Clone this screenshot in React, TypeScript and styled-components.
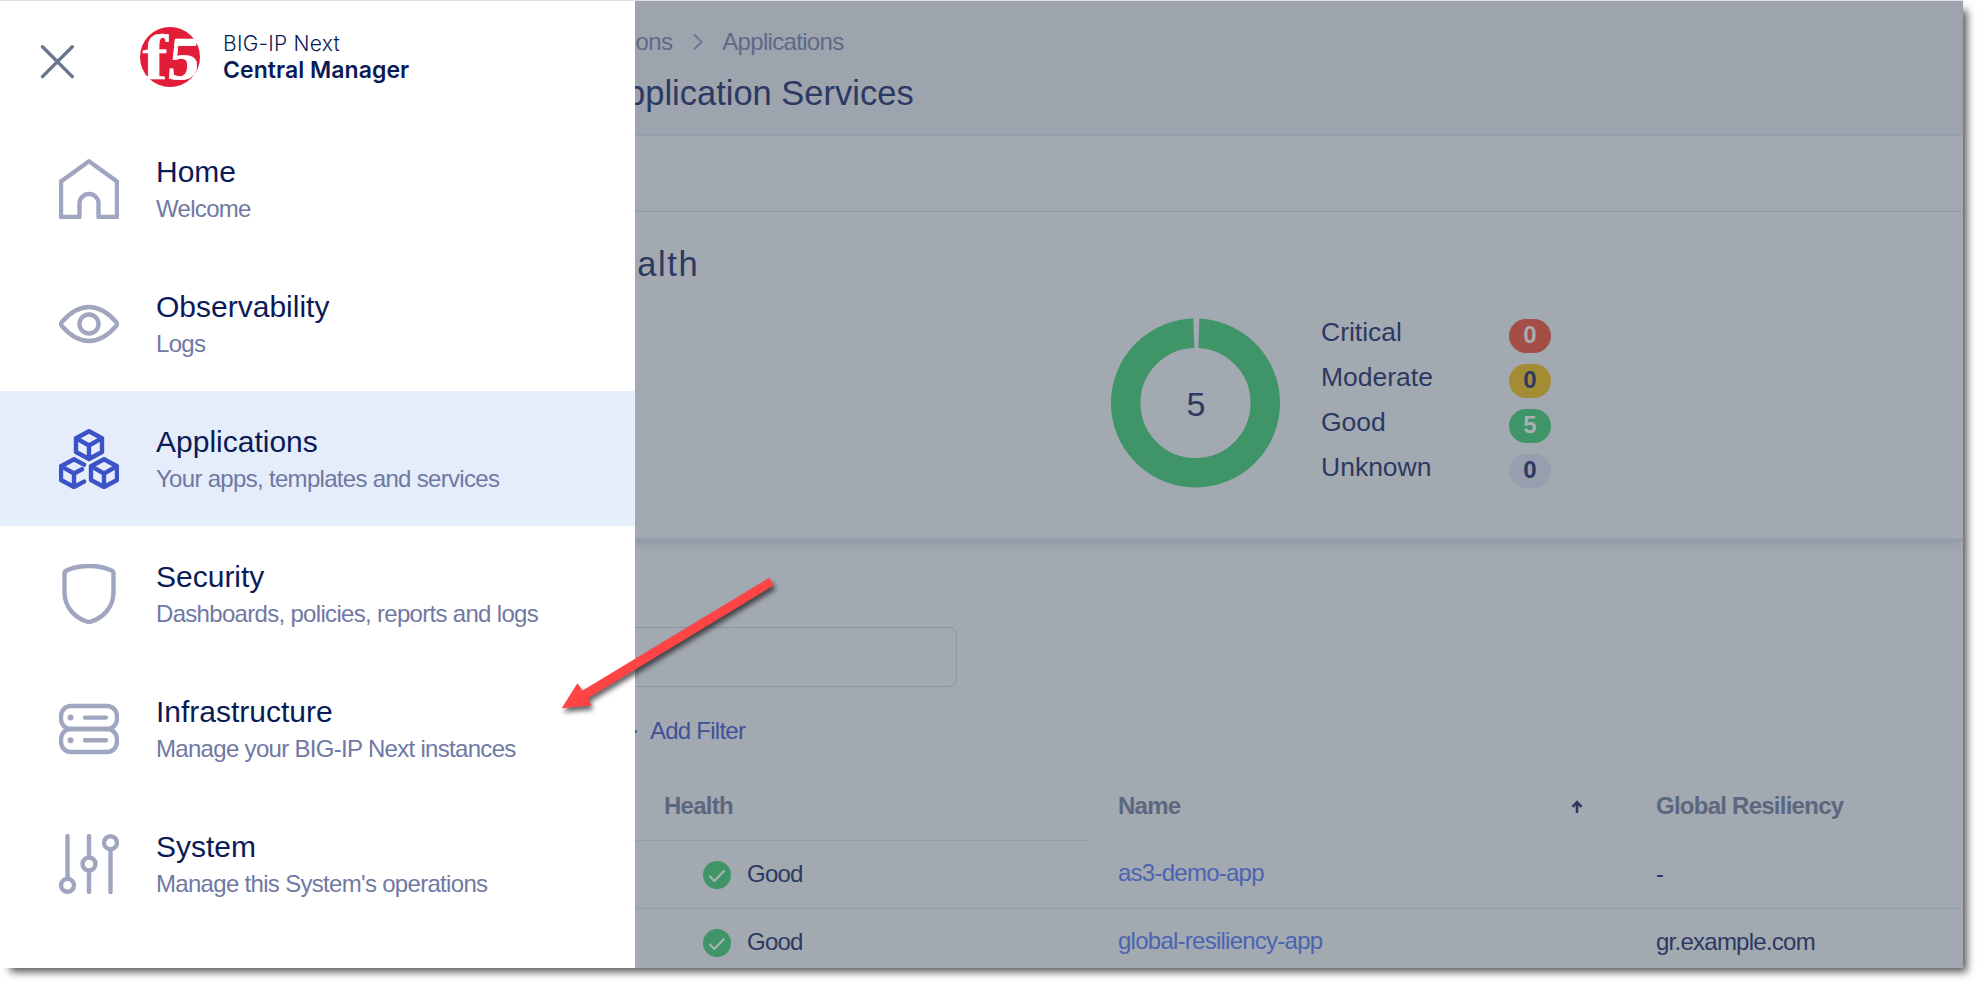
import React from 'react';
import styled, { createGlobalStyle } from 'styled-components';

const c = {
  navy: '#0b1b56',
  muted: '#7079a3',
  icon: '#a0a6c0',
  active: '#3c52c7',
  page: '#a3a9b1',
  header: '#9da4ae',
  line: '#969dad',
  ink: '#2c3962',
  link: '#4a64b2',
  green: '#3f9568',
};

const GlobalStyle = createGlobalStyle`
  * { box-sizing: border-box; }
  html { background: #fff; }
  body { margin: 0; min-height: 983px; font-family: 'Liberation Sans', Arial, sans-serif; }
`;

const Window = styled.div`
  position: relative;
  width: 1963px;
  height: 968px;
  border-top: 1px solid #dedede;
  background: ${c.page};
  box-shadow: 7px 7px 8px -3px rgba(0, 0, 0, 0.66);
`;

/* ---------- drawer ---------- */

const Drawer = styled.aside`
  position: absolute;
  left: 0;
  top: 0;
  z-index: 2;
  width: 635px;
  height: 967px;
  background: #fff;
`;

const DrawerHeader = styled.header`
  display: flex;
  align-items: flex-start;
  height: 120px;
  padding: 26px 0 0 40px;
`;

const CloseIcon = styled.svg`
  width: 35px;
  height: 35px;
  margin: 17px 65px 0 0;
`;

const LogoMark = styled.svg`
  width: 60px;
  height: 60px;
  overflow: visible;
`;

const Brand = styled.div`
  display: flex;
  flex-direction: column;
  margin: 4px 0 0 23px;
  color: ${c.navy};
  font-family: Inter, sans-serif;
`;

const Product = styled.span`
  font-size: 21px;
  font-weight: 300;
  line-height: 26px;
  letter-spacing: 0.25px;
`;

const Edition = styled.strong`
  font-size: 23px;
  font-weight: 600;
  line-height: 27px;
  letter-spacing: 0.05px;
`;

const NavItem = styled.a<{ $active?: boolean }>`
  display: flex;
  gap: 37px;
  height: 135px;
  padding: 33px 0 0 59px;
  background: ${p => (p.$active ? '#e5ecfa' : 'transparent')};
  color: ${p => (p.$active ? c.active : c.icon)};
`;

const NavIcon = styled.svg`
  width: 60px;
  height: 60px;
  margin-top: 5px;
  fill: none;
  stroke: currentColor;
  stroke-width: 4.4;
  stroke-linecap: round;
  stroke-linejoin: round;
`;

const NavText = styled.div`
  display: flex;
  flex-direction: column;
  gap: 4px;
`;

const NavTitle = styled.span`
  color: ${c.navy};
  font-size: 30px;
  line-height: 36px;
`;

const NavSub = styled.span`
  color: ${c.muted};
  font-size: 24px;
  line-height: 30px;
  letter-spacing: -0.69px;
`;

/* ---------- page behind the drawer ---------- */

const Page = styled.main`
  display: flex;
  flex-direction: column;
  height: 967px;
  overflow: hidden;
  color: ${c.ink};

  > * {
    flex-shrink: 0;
  }
`;

const PageHeader = styled.header`
  height: 135px;
  padding: 27px 0 0 551px;
  background: ${c.header};
  border-bottom: 2px solid ${c.line};
`;

const Crumbs = styled.nav`
  display: flex;
  align-items: center;
  color: #5f6a87;
  font-size: 24px;
  line-height: 28px;
  letter-spacing: -0.68px;
`;

const CrumbArrow = styled.svg`
  width: 12px;
  height: 18px;
  margin: 0 18px 0 20px;
`;

const PageTitle = styled.h1`
  margin: 17px 0 0 52px;
  font-size: 34.5px;
  font-weight: 400;
  line-height: 40px;
`;

const TabBar = styled.div`
  height: 76px;
  border-bottom: 1px solid ${c.line};
`;

const HealthPanel = styled.section`
  height: 328px;
  padding: 31px 0 0 590px;
  border-bottom: 2px solid ${c.line};
  box-shadow: 0 3px 9px rgba(110, 118, 138, 0.35);
`;

const PanelTitle = styled.h2`
  margin: 0;
  font-size: 34.5px;
  font-weight: 400;
  line-height: 42px;
  letter-spacing: 1.6px;
`;

const HealthBody = styled.div`
  display: flex;
  padding: 28px 0 0 520px;
`;

const Donut = styled.svg`
  width: 172px;
  height: 172px;
  margin-top: 4px;
`;

const Legend = styled.ul`
  display: flex;
  flex-direction: column;
  width: 230px;
  margin: 0 0 0 39px;
  padding: 0;
  list-style: none;
`;

const LegendRow = styled.li`
  display: flex;
  justify-content: space-between;
  height: 45px;
  font-size: 26.5px;
  line-height: 38px;
`;

const Pill = styled.span<{ $bg: string; $fg: string }>`
  width: 42px;
  height: 34px;
  margin-top: 6px;
  border-radius: 17px;
  background: ${p => p.$bg};
  color: ${p => p.$fg};
  font-size: 24px;
  font-weight: 700;
  line-height: 32px;
  text-align: center;
`;

const Tools = styled.div`
  padding: 87px 0 0 400px;
`;

const SearchBox = styled.div`
  width: 557px;
  height: 60px;
  border: 1px solid #8c94a5;
  border-radius: 8px;
`;

const AddFilter = styled.div`
  display: flex;
  align-items: center;
  gap: 13px;
  margin: 28px 0 0 217px;
  color: #40529a;
  font-size: 24px;
  line-height: 32px;
  letter-spacing: -0.75px;
`;

const PlusIcon = styled.svg`
  width: 20px;
  height: 20px;
`;

const Table = styled.div`
  margin-top: 26px;
  font-size: 24px;
  letter-spacing: -0.75px;
`;

const Row = styled.div<{ $head?: boolean }>`
  display: grid;
  grid-template-columns: 1088px 537px 1fr;
  height: 68px;
  color: ${p => (p.$head ? '#5b677e' : c.ink)};
  font-weight: ${p => (p.$head ? 700 : 400)};
  border-bottom: 1px solid ${p => (p.$head ? 'transparent' : c.line)};
`;

const Cell = styled.div<{ $indent: number; $rule?: boolean }>`
  display: flex;
  align-items: center;
  justify-content: flex-start;
  padding: 0 0 2px ${p => p.$indent}px;
  box-shadow: ${p => (p.$rule ? `0 1px 0 ${c.line}` : 'none')};
`;

const SortArrow = styled.svg`
  width: 12px;
  height: 14px;
  margin: 2px 42px 0 auto;
`;

const StatusIcon = styled.svg`
  width: 28px;
  height: 28px;
  margin: 2px 16px 0 0;
`;

const AppLink = styled.a`
  margin-top: -2px;
  color: ${c.link};
`;

const Pointer = styled.svg`
  position: absolute;
  left: 545px;
  top: 559px;
  z-index: 3;
  width: 250px;
  height: 170px;
  filter: drop-shadow(2px 4px 2.5px rgba(0, 0, 0, 0.6));
`;

const hex = (x: number, y: number) =>
  `M${x - 13} ${y - 6.8}L${x} ${y - 13.8}L${x + 13} ${y - 6.8}V${y + 7}L${x} ${y + 14}L${x - 13} ${y + 7}Z` +
  `M${x - 13} ${y - 6.8}L${x} ${y + 0.5}L${x + 13} ${y - 6.8}M${x} ${y + 0.5}V${y + 14}`;

const openHex = (x: number, y: number) =>
  `M${x + 10} ${y - 8.4}L${x} ${y - 13.8}L${x - 13} ${y - 6.8}V${y + 7}L${x} ${y + 14}L${x + 10} ${y + 8.6}` +
  `M${x - 13} ${y - 6.8}L${x} ${y + 0.5}L${x + 8} ${y - 3.8}M${x} ${y + 0.5}V${y + 14}`;

const nav = [
  {
    title: 'Home',
    sub: 'Welcome',
    icon: <path d="M20.5 58H2V22.5L30 2.3L58 22.5V58H39.5V44.5a9.5 9.5 0 0 0-19 0Z" />,
  },
  {
    title: 'Observability',
    sub: 'Logs',
    icon: (
      <>
        <path d="M2.8 32Q1.3 30 2.8 28C12 17.5 20 13 30 13S48 17.5 57.2 28Q58.7 30 57.2 32C48 42.5 40 47 30 47S12 42.5 2.8 32Z" />
        <circle cx="30" cy="30" r="9.5" />
      </>
    ),
  },
  {
    title: 'Applications',
    sub: 'Your apps, templates and services',
    active: true,
    icon: <path d={hex(30, 16) + openHex(15, 44) + hex(45, 44)} />,
  },
  {
    title: 'Security',
    sub: 'Dashboards, policies, reports and logs',
    icon: (
      <path d="M5.5 9Q5.5 7.6 7 6.8C14 3.3 21 2 30 2S46 3.3 53 6.8Q54.5 7.6 54.5 9V28C54.5 44 43.5 53.5 33 57.3Q30 58.6 27 57.3C16.5 53.5 5.5 44 5.5 28Z" />
    ),
  },
  {
    title: 'Infrastructure',
    sub: 'Manage your BIG-IP Next instances',
    icon: (
      <>
        <rect x="2" y="7" width="56" height="23" rx="10" />
        <rect x="2" y="30" width="56" height="23" rx="10" />
        <path d="M26 18.6H47M26 41.3H47" />
        <path d="M11.5 18.6v.01M11.5 41.3v.01" strokeWidth="6" />
      </>
    ),
  },
  {
    title: 'System',
    sub: "Manage this System's operations",
    icon: (
      <>
        <circle cx="8.5" cy="51.3" r="6.5" />
        <circle cx="30" cy="30" r="6.5" />
        <circle cx="51.5" cy="8.7" r="6.5" />
        <path d="M8.5 2V44.8M30 2V23.5M30 36.5V58M51.5 15.2V58" />
      </>
    ),
  },
];

const legend = [
  { label: 'Critical', value: 0, bg: '#a44e48', fg: '#a9abb2' },
  { label: 'Moderate', value: 0, bg: '#a38c33', fg: c.ink },
  { label: 'Good', value: 5, bg: c.green, fg: '#a9b1b4' },
  { label: 'Unknown', value: 0, bg: '#979eae', fg: c.ink },
];

const apps = [
  { name: 'as3-demo-app', gr: '-' },
  { name: 'global-resiliency-app', gr: 'gr.example.com' },
];

const Logo = () => (
  <LogoMark viewBox="0 0 60 60">
    <circle cx="30" cy="30" r="30" fill="#e21d38" />
    <g fill="#fff" stroke="#fff" fontFamily="'Liberation Serif', serif" fontWeight="700">
      <text transform="translate(2.5 52) scale(1.18 1)" fontSize="64" strokeWidth="0.6">f</text>
      <text transform="translate(26.5 52) skewX(-6) scale(1.02 1)" fontSize="61" strokeWidth="0.7">5</text>
    </g>
  </LogoMark>
);

export default function App() {
  return (
    <>
      <GlobalStyle />
      <Window>
        <Drawer>
          <DrawerHeader>
            <CloseIcon viewBox="0 0 35 35" stroke="#68758c" strokeWidth="3.4" strokeLinecap="round">
              <path d="M2.5 2.8L32.3 32.6M32.3 2.8L2.5 32.6" />
            </CloseIcon>
            <Logo />
            <Brand>
              <Product>BIG-IP Next</Product>
              <Edition>Central Manager</Edition>
            </Brand>
          </DrawerHeader>
          {nav.map(n => (
            <NavItem key={n.title} $active={n.active}>
              <NavIcon viewBox="0 0 60 60">{n.icon}</NavIcon>
              <NavText>
                <NavTitle>{n.title}</NavTitle>
                <NavSub>{n.sub}</NavSub>
              </NavText>
            </NavItem>
          ))}
        </Drawer>

        <Page>
          <PageHeader>
            <Crumbs>
              <span>Applications</span>
              <CrumbArrow viewBox="0 0 12 18" fill="none" stroke="#6b7690" strokeWidth="2">
                <path d="M2 1.5L9.5 9L2 16.5" />
              </CrumbArrow>
              <span>Applications</span>
            </Crumbs>
            <PageTitle>Application Services</PageTitle>
          </PageHeader>
          <TabBar />
          <HealthPanel>
            <PanelTitle>Health</PanelTitle>
            <HealthBody>
              <Donut viewBox="0 0 172 172">
                <circle cx="85.5" cy="86" r="69.8" fill="none" stroke={c.green} strokeWidth="29.5" />
                <path d="M83.2 0H89.4L88.4 33H84.4Z" fill={c.page} />
                <text x="86" y="99" textAnchor="middle" fontSize="34" fill={c.ink}>5</text>
              </Donut>
              <Legend>
                {legend.map(l => (
                  <LegendRow key={l.label}>
                    <span>{l.label}</span>
                    <Pill $bg={l.bg} $fg={l.fg}>{l.value}</Pill>
                  </LegendRow>
                ))}
              </Legend>
            </HealthBody>
          </HealthPanel>
          <Tools>
            <SearchBox />
            <AddFilter>
              <PlusIcon viewBox="0 0 20 20" stroke="currentColor" strokeWidth="2.4">
                <path d="M0 10.5H20M10 0.5V20" />
              </PlusIcon>
              <span>Add Filter</span>
            </AddFilter>
          </Tools>
          <Table>
            <Row $head>
              <Cell $indent={664} $rule>Health</Cell>
              <Cell $indent={30}>
                Name
                <SortArrow viewBox="0 0 12 14" fill="none" stroke={c.ink} strokeWidth="2.6">
                  <path d="M6 13V2.5M1.5 6.8L6 2.2L10.5 6.8" />
                </SortArrow>
              </Cell>
              <Cell $indent={31}>Global Resiliency</Cell>
            </Row>
            {apps.map(a => (
              <Row key={a.name}>
                <Cell $indent={703}>
                  <StatusIcon viewBox="0 0 28 28">
                    <circle cx="14" cy="14" r="14" fill={c.green} />
                    <path d="M6.5 15L11.3 20L21.5 9.5" fill="none" stroke="#a9b5b3" strokeWidth="2" />
                  </StatusIcon>
                  Good
                </Cell>
                <Cell $indent={30}>
                  <AppLink>{a.name}</AppLink>
                </Cell>
                <Cell $indent={31}>{a.gr}</Cell>
              </Row>
            ))}
          </Table>
        </Page>

        <Pointer viewBox="545 560 250 170">
          <path d="M769.3 577.8L773.7 585.3L588 698.3L591.5 705.5L561.7 708.3L577.4 683.3L582.6 690.6Z" fill="#fe4444" />
        </Pointer>
      </Window>
    </>
  );
}
